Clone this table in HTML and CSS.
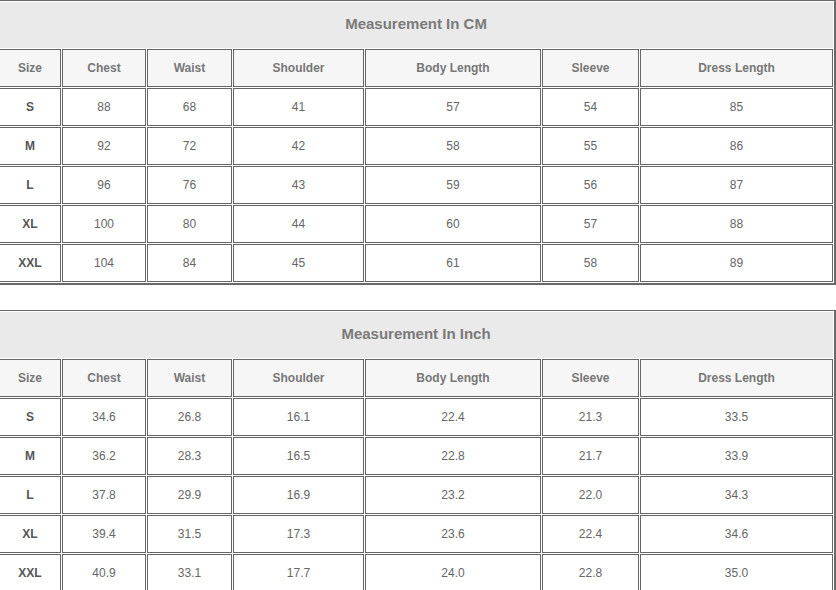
FILE: index.html
```html
<!DOCTYPE html>
<html>
<head>
<meta charset="utf-8">
<link rel="stylesheet" href="styles.css">
</head>
<body>
<table class="size-table">
  <colgroup>
    <col class="c-size"><col class="c-chest"><col class="c-waist"><col class="c-shoulder"><col class="c-body"><col class="c-sleeve"><col class="c-dress">
  </colgroup>
  <tr class="title-row"><td class="title" colspan="7">Measurement In CM</td></tr>
  <tr class="head-row"><th>Size</th><th>Chest</th><th>Waist</th><th>Shoulder</th><th>Body Length</th><th>Sleeve</th><th>Dress Length</th></tr>
  <tr><td class="sz">S</td><td>88</td><td>68</td><td>41</td><td>57</td><td>54</td><td>85</td></tr>
  <tr><td class="sz">M</td><td>92</td><td>72</td><td>42</td><td>58</td><td>55</td><td>86</td></tr>
  <tr><td class="sz">L</td><td>96</td><td>76</td><td>43</td><td>59</td><td>56</td><td>87</td></tr>
  <tr><td class="sz">XL</td><td>100</td><td>80</td><td>44</td><td>60</td><td>57</td><td>88</td></tr>
  <tr><td class="sz">XXL</td><td>104</td><td>84</td><td>45</td><td>61</td><td>58</td><td>89</td></tr>
</table>
<table class="size-table">
  <colgroup>
    <col class="c-size"><col class="c-chest"><col class="c-waist"><col class="c-shoulder"><col class="c-body"><col class="c-sleeve"><col class="c-dress">
  </colgroup>
  <tr class="title-row"><td class="title" colspan="7">Measurement In Inch</td></tr>
  <tr class="head-row"><th>Size</th><th>Chest</th><th>Waist</th><th>Shoulder</th><th>Body Length</th><th>Sleeve</th><th>Dress Length</th></tr>
  <tr><td class="sz">S</td><td>34.6</td><td>26.8</td><td>16.1</td><td>22.4</td><td>21.3</td><td>33.5</td></tr>
  <tr><td class="sz">M</td><td>36.2</td><td>28.3</td><td>16.5</td><td>22.8</td><td>21.7</td><td>33.9</td></tr>
  <tr><td class="sz">L</td><td>37.8</td><td>29.9</td><td>16.9</td><td>23.2</td><td>22.0</td><td>34.3</td></tr>
  <tr><td class="sz">XL</td><td>39.4</td><td>31.5</td><td>17.3</td><td>23.6</td><td>22.4</td><td>34.6</td></tr>
  <tr><td class="sz">XXL</td><td>40.9</td><td>33.1</td><td>17.7</td><td>24.0</td><td>22.8</td><td>35.0</td></tr>
</table>
</body>
</html>
```
FILE: styles.css
```css
html {
  overflow: hidden;
}
body {
  margin: 0;
  background: #ffffff;
  font-family: "Liberation Sans", Arial, sans-serif;
}
.size-table {
  table-layout: fixed;
  width: 839px;
  margin: 0 0 25px -3px;
  border-collapse: separate;
  border-spacing: 1px;
  border-style: solid;
  border-color: #6a6a6a;
  border-width: 1px 2px 2px 1px;
}
.c-size { width: 62px; }
.c-chest { width: 84px; }
.c-waist { width: 85px; }
.c-shoulder { width: 131px; }
.c-body { width: 176px; }
.c-sleeve { width: 97px; }
.c-dress { width: 193px; }
.size-table td,
.size-table th {
  padding: 0;
  border: 1px solid #666666;
  text-align: center;
  vertical-align: middle;
  font-size: 12px;
  color: #666666;
  font-weight: normal;
}
.size-table tr {
  height: 38px;
}
.size-table .title-row {
  height: 46px;
}
.size-table td.title {
  border: none;
  background: #eaeaea;
  color: #7a7a7a;
  font-size: 15px;
  font-weight: bold;
  padding-bottom: 4px;
}
.size-table th {
  background: #f6f6f6;
  color: #777777;
  font-weight: bold;
}
.size-table td.sz {
  font-weight: bold;
  color: #555555;
}
```
